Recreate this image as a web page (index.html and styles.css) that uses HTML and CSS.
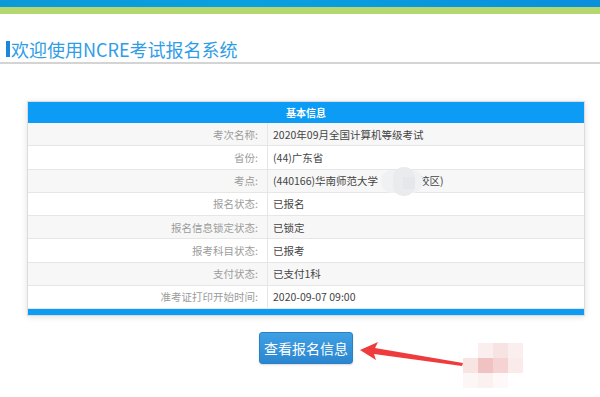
FILE: index.html
```html
<!DOCTYPE html>
<html lang="zh">
<head>
<meta charset="utf-8">
<link rel="stylesheet" href="styles.css">
</head>
<body>
<div class="topbar"></div>
<div class="greenbar"></div>
<h1 class="title"><span class="mark"></span>欢迎使用NCRE考试报名系统</h1>
<div class="content">
  <div class="card">
    <div class="card-head">基本信息</div>
    <div class="row alt"><div class="lab">考次名称:</div><div class="val">2020年09月全国计算机等级考试</div></div>
    <div class="row"><div class="lab">省份:</div><div class="val">(44)广东省</div></div>
    <div class="row alt"><div class="lab">考点:</div><div class="val">(440166)华南师范大学<span class="gap"></span>校区)</div></div>
    <div class="row"><div class="lab">报名状态:</div><div class="val">已报名</div></div>
    <div class="row alt"><div class="lab">报名信息锁定状态:</div><div class="val">已锁定</div></div>
    <div class="row"><div class="lab">报考科目状态:</div><div class="val">已报考</div></div>
    <div class="row alt"><div class="lab">支付状态:</div><div class="val">已支付1科</div></div>
    <div class="row"><div class="lab">准考证打印开始时间:</div><div class="val">2020-09-07 09:00</div></div>
    <div class="card-foot"></div>
  </div>
  <div class="actions"><button class="btn">查看报名信息</button></div>
</div>
<div class="blur-gray">
  <span class="b1"></span><span class="b2"></span><span class="b3"></span>
</div>
<div class="blur-pink">
  <span class="p a"></span><span class="p b"></span><span class="p c"></span><span class="p d"></span>
  <span class="p e"></span><span class="p f"></span><span class="p g"></span><span class="p h"></span>
  <span class="p i"></span><span class="p j"></span><span class="p k"></span><span class="p l"></span>
</div>
<svg class="arrow" width="120" height="30" viewBox="0 0 120 30">
  <polygon points="0,8 18,0 15,6 103,21 102,24 14,12 16,18" fill="#ef3b3b"/>
</svg>
</body>
</html>
```
FILE: styles.css
```css
* { box-sizing: border-box; }
html, body { margin: 0; padding: 0; }
body {
  width: 600px;
  height: 397px;
  overflow: hidden;
  background: #fff;
  font-family: "Noto Sans CJK SC", "Noto Sans", sans-serif;
  position: relative;
}
.topbar {
  height: 7px;
  background: linear-gradient(90deg, #0d98d9 0%, #0aa0e0 40%, #0a8fdc 100%);
}
.greenbar {
  height: 7px;
  background: #b5d76f;
}
.title {
  margin: 21px 0 0 0;
  padding: 0 0 0 6px;
  height: 29px;
  display: flex;
  align-items: center;
  font-size: 18px;
  font-weight: normal;
  color: #2f9de6;
  border-bottom: 2px solid #d4d4d4;
}
.mark {
  display: inline-block;
  width: 4px;
  height: 16px;
  background: #1a86dc;
  margin-right: 1px;
}
.content {
  padding: 37px 15px 0 27px;
}
.card {
  width: 558px;
  border: 1px solid #dcdcdc;
  box-shadow: 0 1px 6px rgba(0,0,0,0.12);
  background: #fff;
}
.card-head {
  height: 21px;
  background: #0c9cf5;
  color: #fff;
  font-size: 10px;
  font-weight: bold;
  text-align: center;
  line-height: 21px;
}
.row {
  display: grid;
  grid-template-columns: 240px 1fr;
  height: 23.25px;
  border-bottom: 1px solid #e6e6e6;
  background: #fff;
  font-size: 10.5px;
  align-items: stretch;
}
.row.alt { background: #f7f7f7; }
.row:last-of-type { border-bottom: none; }
.lab {
  color: #9c9c9c;
  text-align: right;
  padding-right: 9px;
  border-right: 1px solid #e6e6e6;
  display: flex;
  align-items: center;
  justify-content: flex-end;
}
.val {
  color: #444;
  padding-left: 5px;
  display: flex;
  align-items: center;
}
.gap { display: inline-block; width: 41px; }
.card-foot {
  height: 6px;
  background: #0c9cf5;
}
.actions {
  display: flex;
  justify-content: center;
  padding-top: 16px;
}
.btn {
  width: 94px;
  height: 32px;
  border: 1px solid #2c7fc4;
  border-radius: 3px;
  background: linear-gradient(180deg, #3fa0e4 0%, #2a86d0 100%);
  color: #fff;
  font-family: "Noto Sans CJK SC", sans-serif;
  font-size: 14px;
  padding: 0;
  box-shadow: 0 1px 2px rgba(0,0,0,0.15);
}
.blur-gray {
  position: absolute;
  left: 381px;
  top: 167px;
  width: 42px;
  height: 29px;
}
.blur-gray span {
  position: absolute;
}
.blur-gray .b1 { left: 0; top: 3px; width: 42px; height: 23px; border-radius: 12px; background: #f0f1f3; }
.blur-gray .b2 { left: 12px; top: 0; width: 22px; height: 29px; border-radius: 10px; background: #eaebed; }
.blur-gray .b3 { left: 22px; top: 10px; width: 12px; height: 12px; background: #e6e7ea; }
.blur-pink {
  position: absolute;
  left: 463px;
  top: 343px;
  width: 60px;
  height: 45px;
  display: grid;
  grid-template-columns: repeat(4, 15px);
  grid-template-rows: repeat(3, 15px);
}
.p { display: block; }
.a { background: #ffffff; }
.b { background: #fbeeee; }
.c { background: #f8e3e3; }
.d { background: #fbeeee; }
.e { background: #f9e4e4; }
.f { background: #f1c2c2; }
.g { background: #f5d3d3; }
.h { background: #faeaea; }
.i { background: #fdf6f6; }
.j { background: #fcf1f1; }
.k { background: #fef8f8; }
.l { background: #ffffff; }
.arrow {
  position: absolute;
  left: 360px;
  top: 342px;
}
```
